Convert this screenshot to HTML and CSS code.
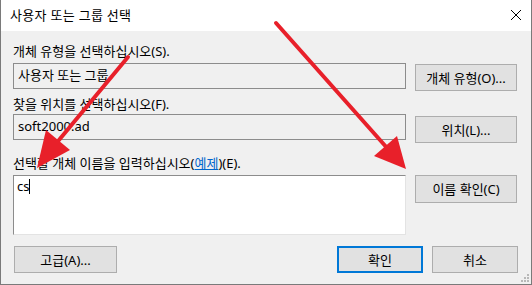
FILE: index.html
```html
<!DOCTYPE html>
<html lang="ko">
<head>
<meta charset="utf-8">
<title>사용자 또는 그룹 선택</title>
<link rel="stylesheet" href="styles.css">
</head>
<body>
<div class="window">
  <div class="titlebar">
    <span class="title">사용자 또는 그룹 선택</span>
    <svg class="close" width="12" height="12" viewBox="0 0 12 12"><path d="M1 1 L11 11 M11 1 L1 11" stroke="#000" stroke-width="1" fill="none"/></svg>
  </div>
  <div class="content">
    <div class="label l1">개체 유형을 선택하십시오(S).</div>
    <div class="row">
      <div class="field">사용자 또는 그룹</div>
      <button class="btn side b1">개체 유형(O)...</button>
    </div>
    <div class="label l2">찾을 위치를 선택하십시오(F).</div>
    <div class="row">
      <div class="field f2">soft2000.ad</div>
      <button class="btn side b2">위치(L)...</button>
    </div>
    <div class="label l3">선택할 개체 이름을 입력하십시오(<span class="link">예제</span>)(E).</div>
    <div class="row">
      <div class="textarea">cs<span class="caret"></span></div>
      <button class="btn side b3">이름 확인(C)</button>
    </div>
    <div class="footer">
      <button class="btn adv">고급(A)...</button>
      <div class="actions">
        <button class="btn act default">확인</button>
        <button class="btn act">취소</button>
      </div>
    </div>
  </div>
  <svg class="grip" width="10" height="10" viewBox="0 0 10 10">
    <rect x="7" y="1" width="2" height="2" fill="#b8b8b8"/>
    <rect x="4" y="4" width="2" height="2" fill="#b8b8b8"/>
    <rect x="7" y="4" width="2" height="2" fill="#b8b8b8"/>
    <rect x="1" y="7" width="2" height="2" fill="#b8b8b8"/>
    <rect x="4" y="7" width="2" height="2" fill="#b8b8b8"/>
    <rect x="7" y="7" width="2" height="2" fill="#b8b8b8"/>
  </svg>
  <svg class="arrows" width="532" height="285" viewBox="0 0 532 285">
    <line x1="128" y1="57" x2="59" y2="140" stroke="#e8202a" stroke-width="4" stroke-linecap="round"/>
    <polygon points="37,168 70,150 46,130" fill="#e8202a"/>
    <line x1="276" y1="23" x2="388" y2="149" stroke="#e8202a" stroke-width="4" stroke-linecap="round"/>
    <polygon points="406,169 374,156 397,136" fill="#e8202a"/>
  </svg>
</div>
</body>
</html>
```
FILE: styles.css
```css
* { box-sizing: border-box; }
html, body { margin: 0; padding: 0; }
body {
  font-family: "Noto Sans", "Noto Sans CJK KR", sans-serif;
  font-size: 13px;
  color: #000;
  background: #fff;
}
.window {
  position: relative;
  width: 532px;
  height: 285px;
  background: #f0f0f0;
  border-left: 1px solid #7a7a7a;
  border-right: 1px solid #7a7a7a;
  border-bottom: 1px solid #7a7a7a;
  overflow: hidden;
}
.titlebar {
  height: 31px;
  background: #fff;
  display: flex;
  align-items: center;
  justify-content: space-between;
  padding: 0 9px 1px 9px;
}
.title { font-size: 13px; line-height: 16px; letter-spacing: 0.3px; }
.close { display: block; margin-top: -1px; }
.content {
  padding: 0 0 0 12px;
}
.label { line-height: 16px; height: 16px; white-space: nowrap; }
.l1 { margin-top: 12px; margin-bottom: 4px; }
.l2 { margin-top: 5px; margin-bottom: 2px; }
.l3 { margin-top: 12px; margin-bottom: 4px; }
.link { color: #0066cc; text-decoration: underline; }
.row {
  display: flex;
  align-items: flex-start;
  gap: 9px;
}
.field {
  width: 393px;
  height: 26px;
  border: 1px solid #8c8c8c;
  background: #f0f0f0;
  padding: 0 4px;
  line-height: 23px;
  white-space: nowrap;
}
.textarea {
  width: 393px;
  height: 60px;
  background: #fff;
  border-style: solid;
  border-width: 1px;
  border-color: #8c8c8c #e3e3e3 #e3e3e3 #8c8c8c;
  padding: 2px 3px;
  line-height: 16px;
}
.caret {
  display: inline-block;
  width: 1px;
  height: 15px;
  background: #000;
  vertical-align: -3px;
}
.btn {
  font-family: inherit;
  font-size: 13px;
  color: #000;
  background: #e1e1e1;
  border: 1px solid #adadad;
  padding: 0;
  margin: 0;
  height: 27px;
  line-height: 16px;
}
.side { width: 102px; }
.b1 { margin-top: 1px; }
.b2 { margin-top: 2px; }
.b3 { height: 28px; }
.footer {
  display: flex;
  justify-content: space-between;
  align-items: flex-start;
  margin-top: 11px;
  padding-right: 13px;
}
.adv { width: 103px; margin-left: 1px; }
.actions { display: flex; gap: 9px; }
.act { width: 86px; }
.default { border: 2px solid #0078d7; }
.grip {
  position: absolute;
  right: 1px;
  bottom: 1px;
}
.arrows {
  position: absolute;
  left: -1px;
  top: 0;
  pointer-events: none;
}
```
